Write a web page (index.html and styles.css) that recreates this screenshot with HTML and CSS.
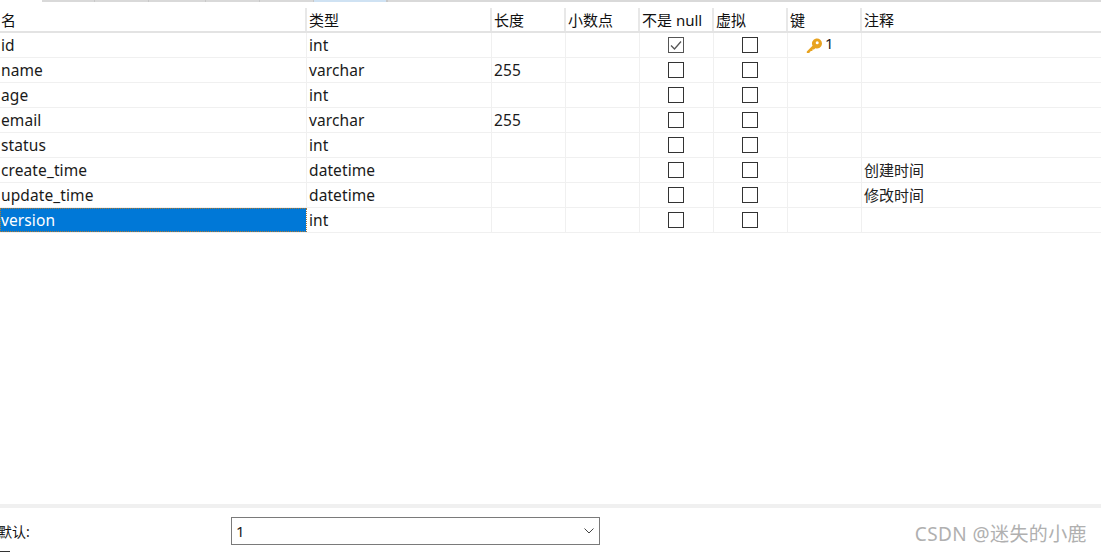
FILE: index.html
```html
<!DOCTYPE html>
<html lang="zh-CN">
<head>
<meta charset="utf-8">
<title>表结构</title>
<link rel="stylesheet" href="styles.css">
</head>
<body>
<div class="page">
  <div class="tabs">
    <span class="tab t1"></span><span class="tab t2"></span><span class="tab t3"></span><span class="tab t4"></span><span class="tab t5"></span><span class="tab t6 active"></span><span class="tab t7"></span>
  </div>
  <div class="table">
    <div class="row head">
      <div class="cell">名</div><div class="cell">类型</div><div class="cell">长度</div><div class="cell">小数点</div><div class="cell">不是 null</div><div class="cell">虚拟</div><div class="cell">键</div><div class="cell">注释</div>
    </div>
    <div class="row">
      <div class="cell">id</div><div class="cell">int</div><div class="cell"></div><div class="cell"></div>
      <div class="cell center"><span class="check checked"><svg viewBox="0 0 16 16" width="16" height="16"><path d="M3 8.500 6.500 12 13 4.500" fill="none" stroke="#555" stroke-width="1.3"/></svg></span></div>
      <div class="cell center"><span class="check"></span></div>
      <div class="cell keycell">
        <svg class="key" viewBox="0 0 16 16" width="16" height="16"><path d="M.8 13.400 6.500 7.700a5 5 0 1 1 2.800 2.500L8 11.500H6.400v1.600H4.800l-1.600 2H.8z" fill="#e8a320"/><circle cx="11.200" cy="4.800" r="1.500" fill="#fff"/></svg><span class="keynum">1</span>
      </div>
      <div class="cell"></div>
    </div>
    <div class="row">
      <div class="cell">name</div><div class="cell">varchar</div><div class="cell">255</div><div class="cell"></div>
      <div class="cell center"><span class="check"></span></div><div class="cell center"><span class="check"></span></div><div class="cell"></div><div class="cell"></div>
    </div>
    <div class="row">
      <div class="cell">age</div><div class="cell">int</div><div class="cell"></div><div class="cell"></div>
      <div class="cell center"><span class="check"></span></div><div class="cell center"><span class="check"></span></div><div class="cell"></div><div class="cell"></div>
    </div>
    <div class="row">
      <div class="cell">email</div><div class="cell">varchar</div><div class="cell">255</div><div class="cell"></div>
      <div class="cell center"><span class="check"></span></div><div class="cell center"><span class="check"></span></div><div class="cell"></div><div class="cell"></div>
    </div>
    <div class="row">
      <div class="cell">status</div><div class="cell">int</div><div class="cell"></div><div class="cell"></div>
      <div class="cell center"><span class="check"></span></div><div class="cell center"><span class="check"></span></div><div class="cell"></div><div class="cell"></div>
    </div>
    <div class="row">
      <div class="cell">create_time</div><div class="cell">datetime</div><div class="cell"></div><div class="cell"></div>
      <div class="cell center"><span class="check"></span></div><div class="cell center"><span class="check"></span></div><div class="cell"></div><div class="cell cjk">创建时间</div>
    </div>
    <div class="row">
      <div class="cell">update_time</div><div class="cell">datetime</div><div class="cell"></div><div class="cell"></div>
      <div class="cell center"><span class="check"></span></div><div class="cell center"><span class="check"></span></div><div class="cell"></div><div class="cell cjk">修改时间</div>
    </div>
    <div class="row">
      <div class="cell selected">version</div><div class="cell">int</div><div class="cell"></div><div class="cell"></div>
      <div class="cell center"><span class="check"></span></div><div class="cell center"><span class="check"></span></div><div class="cell"></div><div class="cell"></div>
    </div>
  </div>
  <div class="spacer"></div>
  <div class="band"></div>
  <div class="footer">
    <span class="label">默认:</span>
    <div class="select"><span>1</span>
      <svg viewBox="0 0 10 6" width="10" height="6"><path d="M.5.500 5 5 9.500.500" fill="none" stroke="#444" stroke-width="1"/></svg>
    </div>
    <span class="mark">CSDN @迷失的小鹿</span>
  </div>
  <div class="edge"></div>
</div>
</body>
</html>
```

FILE: styles.css
```css
* { box-sizing: border-box; }
html, body { margin: 0; padding: 0; background: #fff; }
body {
  width: 1101px;
  height: 552px;
  overflow: hidden;
  font-family: "Noto Sans", "Noto Sans CJK SC", sans-serif;
  font-size: 15.5px;
  letter-spacing: .1px;
  color: #1a1a1a;
}
.page { display: flex; flex-direction: column; height: 552px; }
.tabs {
  display: flex;
  height: 2px;
  margin-left: 42px;
  margin-bottom: 6px;
  background: #d9d9d9;
}
.tab { display: block; height: 2px; border-right: 1px solid #c8c8c8; }
.t1 { width: 53px; }
.t2 { width: 54px; }
.t3 { width: 57px; }
.t4 { width: 54px; }
.t5 { width: 54px; }
.t6 { width: 73px; }
.active { background: #cfe2f3; }
.table { display: flex; flex-direction: column; }
.row {
  display: grid;
  grid-template-columns: 307px 185px 74px 74px 74px 74px 74px 1fr;
  height: 25px;
  border-bottom: 1px solid #f0f0f0;
}
.row.head { height: 25px; border-bottom: 2px solid #e3e3e3; font-size: 15px; letter-spacing: 0; }
.cell {
  display: flex;
  align-items: center;
  padding-left: 1px;
  border-right: 1px solid #f0f0f0;
  line-height: 24px;
  white-space: nowrap;
  overflow: hidden;
}
.cell.cjk { font-size: 15px; letter-spacing: 0; color: #222; }
.head .cell { padding-left: 2px; border-right: 2px solid #e8e8e8; color: #111; padding-top: 1px; }
.head .cell:first-child { padding-left: 1px; }
.row .cell:nth-child(n+2) { padding-left: 2px; }
.cell:last-child { border-right: 0; }
.row .cell.center { padding-left: 28px; }
.check {
  display: block;
  width: 16px;
  height: 16px;
  border: 1px solid #333;
  background: #fff;
  margin-top: -1px;
}
.check.checked { border-color: #555; }
.check svg { display: block; margin: -1px; }
.keycell { align-items: flex-start; }
.key { margin: 5px 0 0 16px; flex: none; }
.row .keycell .keynum { margin-left: 3px; line-height: 21px; font-size: 15px; letter-spacing: 0; }
.selected {
  background: #0078d7;
  color: #fff;
  outline: 1px dotted #b07a30;
  outline-offset: -1px;
  border-right-color: #fff;
}
.spacer { flex: 1; }
.band { height: 4px; background: #f0f0f0; }
.footer {
  display: flex;
  align-items: center;
  height: 43px;
  padding-top: 2px;
}
.label { margin-left: -2px; width: 233px; font-size: 14px; letter-spacing: 0; color: #111; }
.select {
  display: flex;
  align-items: center;
  justify-content: space-between;
  width: 369px;
  height: 28px;
  border: 1px solid #7a7a7a;
  padding: 0 5px 0 4px;
  font-size: 15px;
}
.mark {
  margin-left: auto;
  margin-right: 14px;
  margin-top: 4px;
  font-size: 19px;
  color: #b0b0b0;
  letter-spacing: .4px;
}
.edge { width: 10px; height: 1px; background: #333; }
```
